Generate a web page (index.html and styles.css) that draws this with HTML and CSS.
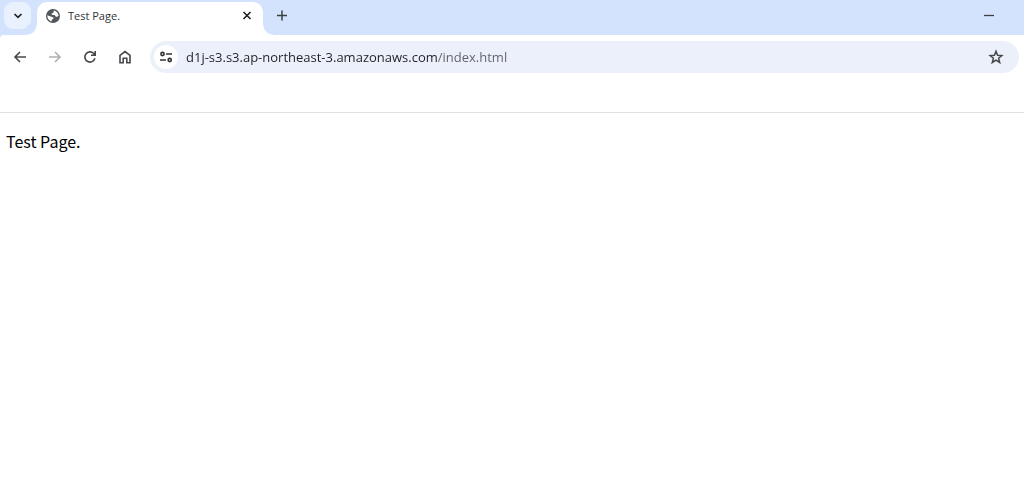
FILE: index.html
```html
<!DOCTYPE html>
<html lang="en">
<head>
    <meta charset="UTF-8">
    <meta name="viewport" content="width=device-width, initial-scale=1.0">
    <title>Test Page.</title>
    <link rel="stylesheet" href="styles.css">
</head>
<body>
    <header class="browser">
        <div class="tab-strip">
            <button class="tab-search" type="button" aria-label="Search tabs">
                <svg width="12" height="12" viewBox="0 0 12 12"><path d="M2.500 4 6 7.300 9.500 4" fill="none" stroke="#202124" stroke-width="1.700"/></svg>
            </button>
            <div class="tab">
                <svg width="16" height="16" viewBox="0 0 16 16">
                    <circle cx="8" cy="8" r="7" fill="#51565b"/>
                    <path d="M2.300 7.300 5.700 8.600c1 .4 1.900.2 2.700 1.200.5.700-.2 1.200-1 1.400-.7.300-.5 1.200-1 2.200C3.900 12.800 2.200 10.500 2.300 7.300z" fill="#fff"/>
                    <path d="M8.900 2.400c2.600.5 4.500 2.600 4.700 5.300-.7.900-1.500 1.300-2.600 1-.9-.3-.7-1.400-1.700-1.600-1.200-.2-2.500.1-2.700-.9-.2-1.100 1.400-.8 1.900-1.600.4-.7-.2-1.300.4-2.200z" fill="#fff"/>
                </svg>
                <span class="tab-title">Test Page.</span>
                <button class="tab-close" type="button" aria-label="Close tab">
                    <svg width="12" height="12" viewBox="0 0 12 12"><path d="m2.500 2 7 7m0-7-7 7" stroke="#202124" stroke-width="1.600"/></svg>
                </button>
            </div>
            <button class="new-tab" type="button" aria-label="New tab">
                <svg width="12" height="12" viewBox="0 0 12 12"><path d="M6 .5v10M1 5.500h10" stroke="#3c4043" stroke-width="1.500"/></svg>
            </button>
            <button class="minimize" type="button" aria-label="Minimize">
                <svg width="10" height="10" viewBox="0 0 10 10"><path d="M0 4.500h10" stroke="#3c4043" stroke-width="1.300"/></svg>
            </button>
        </div>

        <div class="toolbar">
            <nav class="nav">
                <button type="button" aria-label="Back">
                    <svg width="16" height="16" viewBox="0 0 16 16"><path d="M14 8H3m5-5L3 8l5 5" fill="none" stroke="#45484b" stroke-width="1.600"/></svg>
                </button>
                <button type="button" aria-label="Forward" disabled>
                    <svg width="16" height="16" viewBox="0 0 16 16"><path d="M2 8h11M8 3l5 5-5 5" fill="none" stroke="#aeb0b2" stroke-width="1.600"/></svg>
                </button>
                <button type="button" aria-label="Reload">
                    <svg width="16" height="16" viewBox="0 0 16 16"><path d="M12.900 9.300A5.100 5.100 0 1 1 11.700 4.500l1.500 1.600M13.200 2v4.300H9" fill="none" stroke="#45484b" stroke-width="1.600"/></svg>
                </button>
                <button type="button" aria-label="Home">
                    <svg width="16" height="16" viewBox="0 0 16 16"><path d="M3 6.300 8 2.500l5 3.800v7.400H9.800V9.200H6.200v4.500H3z" fill="none" stroke="#45484b" stroke-width="1.600"/></svg>
                </button>
            </nav>
            <form class="omnibox">
                <button class="site-info" type="button" aria-label="View site information">
                    <svg width="14" height="14" viewBox="0 0 14 14"><g fill="none" stroke="#303336" stroke-width="1.600"><circle cx="3.500" cy="4" r="1.600"/><path d="M7 4h6M1 10h6"/><circle cx="10.700" cy="10" r="1.600"/></g></svg>
                </button>
                <input class="address" type="text" aria-label="Address" value="d1j-s3.s3.ap-northeast-3.amazonaws.com/index.html" spellcheck="false">
                <button class="bookmark" type="button" aria-label="Bookmark this tab">
                    <svg width="16" height="16" viewBox="0 0 16 16"><path d="m8 2.200 1.600 4 4.300.3-3.300 2.800 1.100 4.200L8 11.200l-3.700 2.300 1.100-4.200L2.100 6.500l4.300-.3z" fill="none" stroke="#45484b" stroke-width="1.500"/></svg>
                </button>
            </form>
        </div>
        <div class="bookmarks-bar"></div>
    </header>

    <main class="page">
        <p>Test Page.</p>
    </main>
</body>
</html>
```

FILE: styles.css
```css
* {
    margin: 0;
    padding: 0;
    box-sizing: border-box;
}

body {
    background: #fff;
    font-family: "Noto Sans", sans-serif;
    color: #000;
}

button {
    display: flex;
    align-items: center;
    justify-content: center;
    border: none;
    background: none;
}

svg {
    display: block;
    flex-shrink: 0;
}

.browser {
    background: #d3e2fd;
}

/* tabs */
.tab-strip {
    display: flex;
    align-items: center;
    height: 35px;
    padding: 0 28px 0 4px;
}

.tab-search {
    width: 27px;
    height: 27px;
    margin-bottom: 4px;
    border-radius: 9px;
    background: #e9f1fe;
}

.tab {
    position: relative;
    display: flex;
    align-items: center;
    align-self: flex-end;
    gap: 7px;
    width: 226px;
    height: 33px;
    margin-left: 6px;
    padding: 0 9px 5px 8px;
    border-radius: 10px 10px 0 0;
    background: #fff;
}

/* curved feet on both sides of the tab */
.tab::before,
.tab::after {
    content: "";
    position: absolute;
    bottom: 0;
    width: 10px;
    height: 10px;
}

.tab::before {
    right: 100%;
    background: radial-gradient(circle at 0 0, #d3e2fd 9px, #fff 10px);
}

.tab::after {
    left: 100%;
    background: radial-gradient(circle at 100% 0, #d3e2fd 9px, #fff 10px);
}

.tab-title {
    flex: 1;
    font-family: "Open Sans", sans-serif;
    font-size: 11px;
    line-height: 16px;
    color: #303336;
}

.tab-close {
    width: 14px;
    height: 16px;
}

.new-tab {
    width: 24px;
    height: 24px;
    margin: 0 auto 4px 7px;
}

.minimize {
    width: 14px;
    height: 24px;
    margin-bottom: 4px;
}

/* toolbar */
.toolbar {
    display: flex;
    align-items: center;
    gap: 8px;
    padding: 6px 5px 6px 2px;
    border-top-left-radius: 4px;
    background: #fff;
}

.nav {
    display: flex;
}

.nav button {
    width: 35px;
    height: 32px;
}

.omnibox {
    flex: 1;
    display: flex;
    align-items: center;
    height: 32px;
    padding: 0 15px 0 4px;
    border-radius: 16px;
    background: #ebf0fa;
}

.site-info {
    width: 24px;
    height: 24px;
    border-radius: 50%;
    background: #fff;
}

.address {
    flex: 1;
    min-width: 0;
    height: 24px;
    margin-left: 8px;
    border: none;
    outline: none;
    font-family: "Open Sans", sans-serif;
    font-size: 13px;
    /* host is dark, path is lighter */
    background: linear-gradient(to right, #202124 251px, #5f6164 251px);
    -webkit-background-clip: text;
    background-clip: text;
    -webkit-text-fill-color: transparent;
}

.bookmark {
    width: 16px;
    height: 24px;
}

.bookmarks-bar {
    height: 34px;
    border-bottom: 1px solid #dfe1e3;
    background: #fff;
}

/* page content */
.page {
    padding: 16px 6px;
    font-family: "Noto Sans CJK JP", sans-serif;
    font-size: 16px;
    line-height: 24px;
}
```
